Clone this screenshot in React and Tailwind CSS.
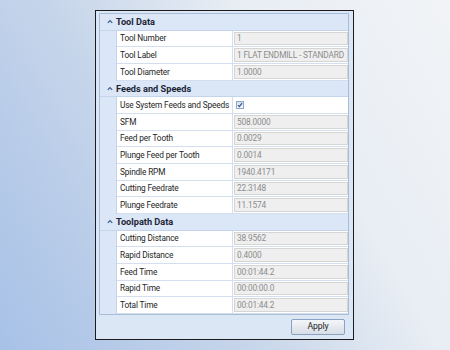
import React from "react";

const sections = [
  {
    title: "Tool Data",
    rows: [
      ["Tool Number", "1"],
      ["Tool Label", "1 FLAT ENDMILL - STANDARD"],
      ["Tool Diameter", "1.0000"],
    ],
  },
  {
    title: "Feeds and Speeds",
    rows: [
      ["Use System Feeds and Speeds", null],
      ["SFM", "508.0000"],
      ["Feed per Tooth", "0.0029"],
      ["Plunge Feed per Tooth", "0.0014"],
      ["Spindle RPM", "1940.4171"],
      ["Cutting Feedrate", "22.3148"],
      ["Plunge Feedrate", "11.1574"],
    ],
  },
  {
    title: "Toolpath Data",
    rows: [
      ["Cutting Distance", "38.9562"],
      ["Rapid Distance", "0.4000"],
      ["Feed Time", "00:01:44.2"],
      ["Rapid Time", "00:00:00.0"],
      ["Total Time", "00:01:44.2"],
    ],
  },
];

function Chevron() {
  return (
    <svg width="6" height="5" viewBox="0 0 6 5" className="shrink-0">
      <path d="M0.8 3.8 L3 1.6 L5.2 3.8" fill="none" stroke="#3a5a86" strokeWidth="1.2" />
    </svg>
  );
}

function Check() {
  return (
    <div className="w-[8px] h-[8px] border border-[#8fa7c7] bg-[linear-gradient(#d4e0f0,#f6f9fd)] flex items-center justify-center">
      <svg width="6" height="6" viewBox="0 0 6 6">
        <path d="M1 3.2 L2.4 4.6 L5 1.2" fill="none" stroke="#2b4f86" strokeWidth="1.1" />
      </svg>
    </div>
  );
}

export default function App() {
  return (
    <div className="w-[450px] h-[350px] bg-[linear-gradient(60deg,#a7c1e7_0%,#c6d5ea_38%,#e9eef4_68%,#f1f3f6_100%)] pt-[10px] pl-[95px] font-['Roboto',sans-serif] text-[8.3px] tracking-[-0.15px] leading-none">
      <div className="w-[259px] h-[330px] border border-[#1c1c1c] bg-[#dbe7f5] p-[2px] flex flex-col">
        <div className="border border-[#a9bdd8] bg-white flex flex-col ml-[1px] mr-[2px]">
          {sections.map((s) => (
            <div key={s.title} className="flex flex-col">
              <div className="h-[16.67px] bg-[#dbe7f7] border-b border-[#c4d4ea] flex items-center pl-[7px] gap-[3px] font-bold text-[#1b2535] text-[9.2px] tracking-[0px]">
                <Chevron />
                <span>{s.title}</span>
              </div>
              {s.rows.map(([name, val]) => (
                <div key={name} className="h-[16.67px] flex">
                  <div className="w-[17px] shrink-0 bg-[#dbe7f7] border-r border-[#c4d4ea]" />
                  <div className="w-[116px] shrink-0 border-b border-r border-[#d3dfee] flex items-center pl-[3px] text-[#1e1e1e] whitespace-nowrap">
                    {name}
                  </div>
                  <div className="flex-1 min-w-0 border-b border-[#d3dfee] pt-[1px] pb-[1px] pl-[1px] flex">
                    {val === null ? (
                      <div className="flex items-center pl-[2px]">
                        <Check />
                      </div>
                    ) : (
                      <div className="flex-1 min-w-0 bg-[#efefef] border border-[#d5d5d5] flex items-center pl-[2px] text-[#8c8c8c] whitespace-nowrap overflow-hidden">
                        {val}
                      </div>
                    )}
                  </div>
                </div>
              ))}
            </div>
          ))}
        </div>
        <div className="flex justify-end mt-[4px] mr-[6px]">
          <button className="w-[54px] h-[16px] border border-[#8aa1c1] rounded-[2px] bg-[linear-gradient(#f4f6f9,#e6eaf0_50%,#d7dde6)] text-[#1e1e1e] text-[8.7px] leading-none flex items-center justify-center">
            Apply
          </button>
        </div>
      </div>
    </div>
  );
}
